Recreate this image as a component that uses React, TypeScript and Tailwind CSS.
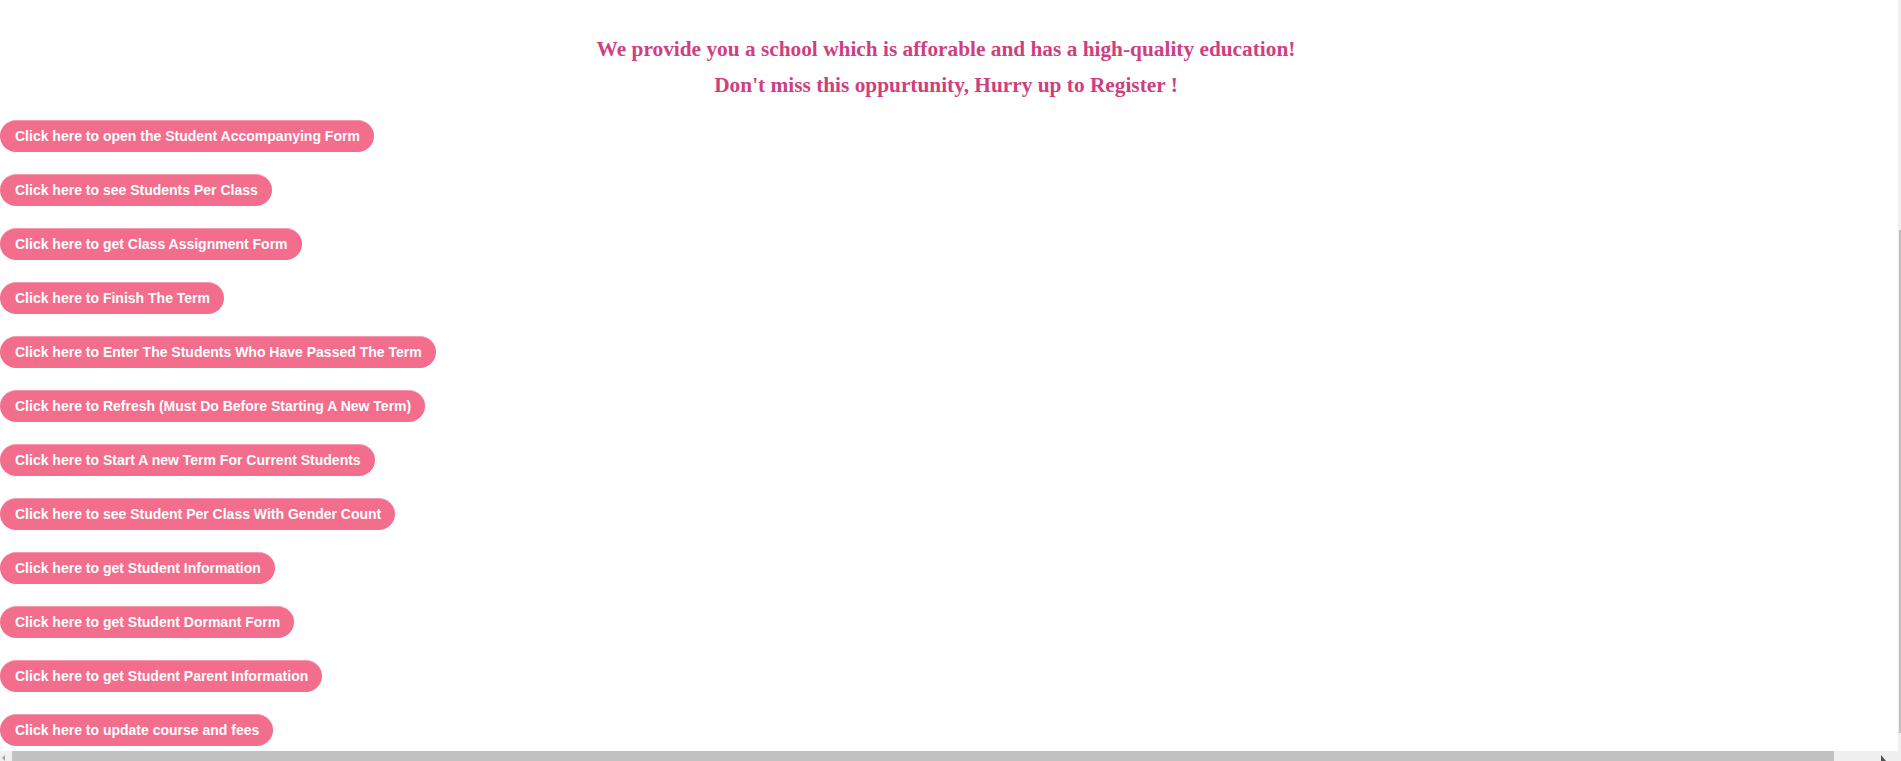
const actions = [
  "Click here to open the Student Accompanying Form",
  "Click here to see Students Per Class",
  "Click here to get Class Assignment Form",
  "Click here to Finish The Term",
  "Click here to Enter The Students Who Have Passed The Term",
  "Click here to Refresh (Must Do Before Starting A New Term)",
  "Click here to Start A new Term For Current Students",
  "Click here to see Student Per Class With Gender Count",
  "Click here to get Student Information",
  "Click here to get Student Dormant Form",
  "Click here to get Student Parent Information",
  "Click here to update course and fees",
];

export default function App() {
  return (
    <div className="h-[761px] w-[1901px] flex flex-col overflow-hidden bg-white">
      <div className="flex flex-1 min-h-0">
        {/* PAGE */}
        <main className="flex-1 min-w-0">
          <div className="pt-[31px] pr-[6px] text-center font-['Liberation_Serif','Times_New_Roman',serif] font-bold text-[21.33px] leading-[36px] text-[#cf3f7f]">
            <p>We provide you a school which is afforable and has a high-quality education!</p>
            <p>Don't miss this oppurtunity, Hurry up to Register !</p>
          </div>

          <div className="mt-[17px] flex flex-col items-start gap-[22px]">
            {actions.map((label) => (
              <button
                key={label}
                type="button"
                title={label}
                className="rounded-full border-t border-[#f79ab0] bg-[#f36d8c] pl-[15px] pr-[14px] pt-[7px] pb-2 font-['Liberation_Sans',Arial,sans-serif] text-[14px] font-bold leading-4 text-white whitespace-nowrap"
              >
                {label}
              </button>
            ))}
          </div>
        </main>

        {/* VERTICAL SCROLLBAR (cut off) */}
        <div className="w-[3px] flex flex-col bg-[#f0f0f0] pt-[230px] pb-[18px]">
          <div className="ml-[1px] w-[2px] flex-1 bg-[#c1c1c1]" />
        </div>
      </div>

      {/* HORIZONTAL SCROLLBAR */}
      <div className="h-[10px] flex items-center bg-[#f0f0f0]">
        <svg width="12" height="10" viewBox="0 0 12 10" className="shrink-0">
          <path d="M2 7 L5 4 L5 10 Z" fill="#a3a3a3" />
        </svg>
        <div className="h-[10px] w-[1822px] bg-[#c1c1c1]" />
        <div className="flex-1" />
        <svg width="14" height="10" viewBox="0 0 14 10" className="shrink-0 mr-[7px]">
          <path d="M1 4 L1 10 L6 10 Z" fill="#505050" />
        </svg>
      </div>
    </div>
  );
}
